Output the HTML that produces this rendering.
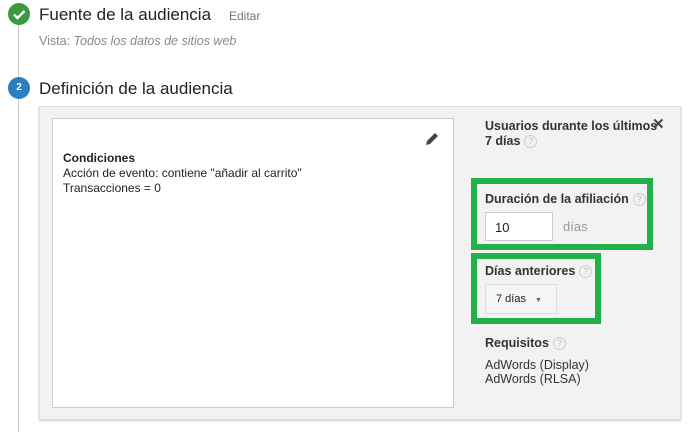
<!DOCTYPE html>
<html><head><meta charset="utf-8"><style>
*{margin:0;padding:0;box-sizing:border-box}
body{width:693px;height:432px;background:#fff;font-family:"Liberation Sans",sans-serif;position:relative;overflow:hidden;color:#222}
.a{position:absolute}
.q{display:inline-block;width:13px;height:13px;border:1px solid #ccc;border-radius:50%;font-size:9px;color:#bbb;text-align:center;line-height:11px;font-weight:normal;vertical-align:1px;margin-left:4px}
.b{font-weight:bold;font-size:12.5px;color:#333}
</style></head><body>
<div class="a" style="left:18px;top:20px;width:1px;height:412px;background:#ccc"></div>
<div class="a" style="left:8px;top:3px;width:22px;height:22px;border-radius:50%;background:#3b9a3f"></div>
<svg class="a" style="left:8px;top:3px" width="22" height="22"><path d="M6 11.5l3.5 3.5 7-7" stroke="#fff" stroke-width="2.4" fill="none"/></svg>
<div class="a" style="left:39px;top:5px;font-size:17px;color:#222">Fuente de la audiencia</div>
<div class="a" style="left:229px;top:9px;font-size:12px;color:#777">Editar</div>
<div class="a" style="left:39px;top:34px;font-size:12.5px;color:#888">Vista: <i>Todos los datos de sitios web</i></div>
<div class="a" style="left:8px;top:77px;width:22px;height:22px;border-radius:50%;background:#2a7fc1;color:#fff;font-size:10px;font-weight:bold;text-align:center;line-height:22px">2</div>
<div class="a" style="left:39px;top:79px;font-size:17px;color:#222">Definición de la audiencia</div>
<div class="a" style="left:39px;top:106px;width:642px;height:314px;background:#f2f2f2;border:1px solid #ddd;box-shadow:0 1px 2px #ccc"></div>
<div class="a" style="left:52px;top:118px;width:402px;height:290px;background:#fff;border:1px solid #ccc"></div>
<svg class="a" style="left:424px;top:131px" width="16" height="16"><path d="M2 14l1-4 8-8 3 3-8 8z" fill="#444"/></svg>
<div class="a" style="left:63px;top:151px;font-size:12px;line-height:15px;color:#222"><b>Condiciones</b><br>Acción de evento: contiene "añadir al carrito"<br>Transacciones = 0</div>
<div class="a b" style="left:485px;top:119px;line-height:15px;width:175px">Usuarios durante los últimos 7 días<span class="q">?</span></div>
<div class="a" style="left:652px;top:115px;font-size:15px;font-weight:bold;color:#444">✕</div>
<div class="a" style="left:471px;top:178px;width:182px;height:72px;border:6px solid #22b04a"></div>
<div class="a b" style="left:485px;top:192px">Duración de la afiliación<span class="q">?</span></div>
<div class="a" style="left:485px;top:212px;width:68px;height:29px;background:#fff;border:1px solid #ccc;font-size:13px;padding:7px 9px">10</div>
<div class="a" style="left:563px;top:219px;font-size:13px;color:#999">días</div>
<div class="a" style="left:471px;top:253px;width:130px;height:71px;border:6px solid #22b04a"></div>
<div class="a b" style="left:485px;top:264px">Días anteriores<span class="q">?</span></div>
<div class="a" style="left:485px;top:284px;width:72px;height:30px;background:#f5f5f5;border:1px solid #ddd;font-size:11px;padding:8px 10px">7 días <span style="font-size:7px;color:#666;margin-left:6px">▼</span></div>
<div class="a b" style="left:485px;top:336px">Requisitos<span class="q">?</span></div>
<div class="a" style="left:485px;top:358px;font-size:12.5px;line-height:14px;color:#333">AdWords (Display)<br>AdWords (RLSA)</div>
</body></html>
